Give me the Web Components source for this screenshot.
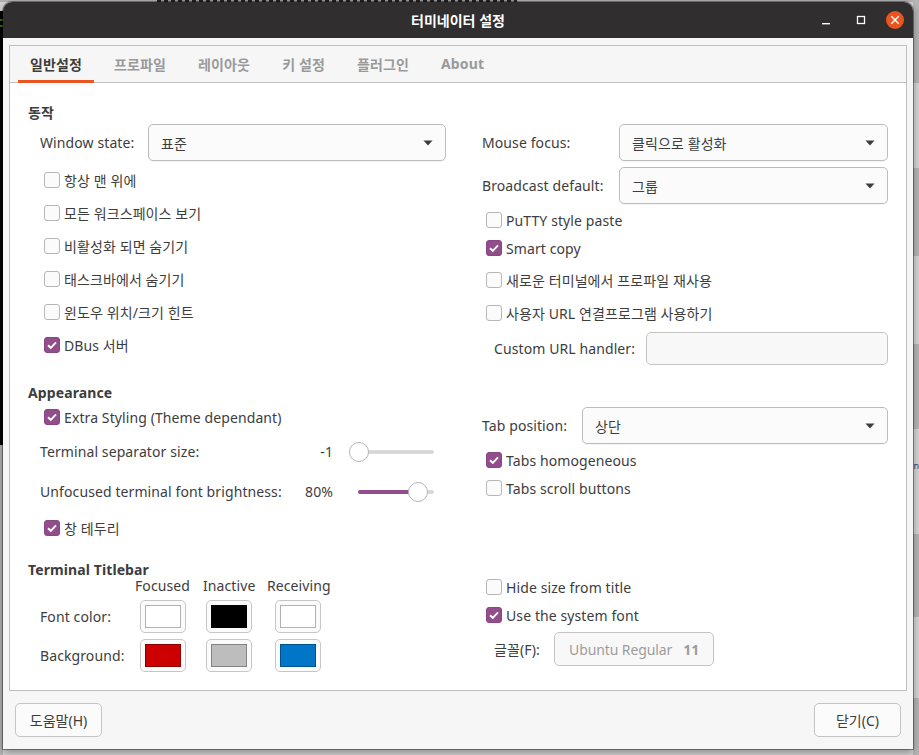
<!DOCTYPE html>
<html lang="ko">
<head>
<meta charset="utf-8">
<title>터미네이터 설정</title>
<style>
html, body { margin: 0; height: 100%; overflow: hidden; }
body { font-family: "Noto Sans", "Noto Sans CJK KR", sans-serif; font-size: 14px; letter-spacing: .1px; color: #3d3d3d; }
</style>
</head>
<body>
<template id="desktop-tpl">
<style>
:host { display: block; position: relative; width: 919px; height: 755px; overflow: hidden; background: #d4d4d4; }
.left { position: absolute; left: 0; top: 11px; width: 3px; height: 434px; background: linear-gradient(#000 8px, #3c6a10 8px, #3c6a10 10px, #000 10px, #000 14px, #3c6a10 14px, #3c6a10 16px, #000 16px); }
.left2 { position: absolute; left: 0; top: 445px; width: 3px; height: 310px; background: #b4b4b4; }
.top { position: absolute; left: 0; top: 0; width: 919px; height: 2px; background: #b0b0b0; }
.top i { position: absolute; left: 157px; top: 0; width: 360px; height: 2px; background: repeating-linear-gradient(90deg, #222 0 4px, #999 4px 7px); }
.right { position: absolute; left: 913px; top: 0; width: 6px; height: 755px; background: linear-gradient(#b6b6b6 0 83px, #d6d6d6 83px 168px, #b6b6b6 168px 256px, #d6d6d6 256px 344px, #b6b6b6 344px 429px, #d6d6d6 429px 534px, #b6b6b6 534px 617px, #d6d6d6 617px 698px, #b6b6b6 698px); }
.n { position: absolute; left: 913.5px; top: 459px; font-size: 9px; letter-spacing: 0; color: #234a7a; }
::slotted(*) { position: absolute; left: 3px; top: 2px; }
</style>
<div class="top"><i></i></div>
<div class="left"></div><div class="left2"></div><div class="right"></div><span class="n">n</span>
<slot></slot>
</template>

<template id="window-tpl">
<style>
:host { display: flex; flex-direction: column; width: 910px; height: 747px; box-sizing: border-box; background: #f6f6f6; border-radius: 9px 9px 0 0; box-shadow: 0 0 0 1px rgba(0,0,0,.35), 0 3px 9px rgba(0,0,0,.4); }
.bar { height: 36px; flex: none; display: grid; grid-template-columns: 1fr auto 1fr; align-items: center; background: #302e2e; border-radius: 9px 9px 0 0; color: #fff; font-weight: 700; letter-spacing: 0; }
.title { grid-column: 2; }
.ctl { grid-column: 3; justify-self: end; display: flex; align-items: center; padding-right: 9px; }
.ctl svg { display: block; }
.body { flex: 1; display: flex; flex-direction: column; padding: 7px 6px 0 6px; min-height: 0; }
</style>
<div class="bar">
  <div class="title"><slot name="title"></slot></div>
  <div class="ctl">
    <svg width="10" height="10" viewBox="0 0 10 10" style="margin-right:25px;margin-top:1px"><rect x="1" y="7" width="8" height="1.4" fill="#fff"/></svg>
    <svg width="10" height="10" viewBox="0 0 10 10" style="margin-right:20px"><rect x="1.5" y="1.5" width="7" height="7" fill="none" stroke="#fff" stroke-width="1.3"/></svg>
    <svg width="18" height="18" viewBox="0 0 18 18"><circle cx="9" cy="9" r="9" fill="#e95420"/><path d="M5.3 5.3l7.4 7.4M12.7 5.3l-7.4 7.4" stroke="#fff" stroke-width="1.4"/></svg>
  </div>
</div>
<div class="body"><slot></slot></div>
</template>

<template id="notebook-tpl">
<style>
:host { display: flex; flex-direction: column; height: 646px; flex: none; box-sizing: border-box; border: 1px solid #c0bfbe; background: #fff; }
.tabs { height: 36px; flex: none; display: flex; padding-left: 8px; background: #f6f6f6; border-bottom: 1px solid #c0bfbe; }
.page { flex: 1; display: grid; grid-template-columns: 418px 406px; column-gap: 36px; padding-left: 18px; align-items: start; }
</style>
<div class="tabs"><slot name="tab"></slot></div>
<div class="page"><slot></slot></div>
</template>

<template id="tab-tpl">
<style>
:host { display: flex; align-items: center; box-sizing: border-box; height: 37px; padding: 0 12px 2px; margin-right: 8px; font-weight: 700; letter-spacing: .13px; color: #9a9a9a; }
:host([active]) { color: #3d3d3d; box-shadow: inset 0 -3px 0 #e95420; }
</style>
<slot></slot>
</template>

<template id="heading-tpl">
<style>
:host { display: block; height: 18px; line-height: 18px; font-weight: 700; white-space: nowrap; }
</style>
<slot></slot>
</template>

<template id="check-tpl">
<style>
:host { display: flex; align-items: center; gap: 4px; white-space: nowrap; height: var(--row, 33px); }
.box { width: 16px; height: 16px; box-sizing: border-box; flex: none; border: 1px solid #b6b6b3; border-radius: 3px; background: #fbfbfb; }
:host([checked]) .box { border-color: #8a4684; background: #924d8b; }
svg { display: none; }
:host([checked]) svg { display: block; }
</style>
<div class="box"><svg width="14" height="14" viewBox="0 0 14 14"><path d="M3 7.2l2.8 2.6L11 4.3" fill="none" stroke="#fff" stroke-width="1.9"/></svg></div>
<div><slot></slot></div>
</template>

<template id="combo-tpl">
<style>
:host { display: flex; align-items: center; justify-content: space-between; flex: 1; box-sizing: border-box; height: 37px; padding: 0 12px; border: 1px solid #bdbcbb; border-radius: 5px; background: #fbfbfb; box-shadow: 0 1px 0 rgba(0,0,0,.04); white-space: nowrap; }
svg { display: block; }
</style>
<div><slot></slot></div>
<svg width="10" height="6" viewBox="0 0 10 6"><path d="M0.5 0.5h9L5 5.5z" fill="#3d3d3d"/></svg>
</template>

<template id="entry-tpl">
<style>
:host { display: block; flex: 1; box-sizing: border-box; height: 33px; border: 1px solid #c4c4c2; border-radius: 5px; background: #f8f8f8; }
</style>
</template>

<template id="row-tpl">
<style>
:host { display: flex; align-items: center; white-space: nowrap; }
</style>
<slot></slot>
</template>

<template id="slider-tpl">
<style>
:host { display: block; position: relative; width: 85px; height: 20px; flex: none; }
.track { position: absolute; left: 9px; right: 0; top: 8px; border-radius: 2px; background: #d6d6d4; border: 1px solid #dcdcda; height: 2px; }
.fill { position: absolute; left: 9px; top: 8px; height: 4px; border-radius: 2px; background: #924d8b; }
.knob { position: absolute; top: 0; width: 20px; height: 20px; box-sizing: border-box; border-radius: 50%; background: #fff; border: 1px solid #b5b5b2; }
</style>
<div class="track"></div><div class="fill"></div><div class="knob"></div>
</template>

<template id="swatch-tpl">
<style>
:host { display: flex; align-items: center; justify-content: center; width: 46px; height: 33px; box-sizing: border-box; border: 1px solid #c6c6c4; border-radius: 5px; background: #fbfbfb; }
.c { width: 36px; height: 23px; box-sizing: border-box; border: 1px solid rgba(0,0,0,.3); }
</style>
<div class="c"></div>
</template>

<template id="button-tpl">
<style>
:host { display: flex; align-items: center; justify-content: center; box-sizing: border-box; height: 34px; padding: 0 14px; border: 1px solid #c4c4c2; border-radius: 5px; background: #fbfbfb; white-space: nowrap; letter-spacing: 0; }
:host([disabled]) { color: #9c9c9c; background: #f8f8f8; letter-spacing: -.1px; }
</style>
<slot></slot>
</template>

<script>
function simple(tag, tpl, extra) {
  customElements.define(tag, class extends HTMLElement {
    constructor() {
      super();
      this.attachShadow({ mode: 'open' });
      this.shadowRoot.appendChild(document.getElementById(tpl).content.cloneNode(true));
    }
    connectedCallback() {
      if (extra) extra(this);
    }
  });
}
simple('tm-desktop', 'desktop-tpl');
simple('tm-window', 'window-tpl');
simple('tm-notebook', 'notebook-tpl');
simple('tm-tab', 'tab-tpl');
simple('tm-heading', 'heading-tpl');
simple('tm-check', 'check-tpl');
simple('tm-combo', 'combo-tpl');
simple('tm-entry', 'entry-tpl');
simple('tm-row', 'row-tpl');
simple('tm-button', 'button-tpl');
simple('tm-slider', 'slider-tpl', el => {
  const pos = Number(el.getAttribute('pos'));
  el.shadowRoot.querySelector('.knob').style.left = pos + 'px';
  el.shadowRoot.querySelector('.fill').style.width = (pos > 0 ? pos : 0) + 'px';
});
simple('tm-swatch', 'swatch-tpl', el => {
  el.shadowRoot.querySelector('.c').style.background = el.getAttribute('color');
});
</script>

<tm-desktop>
  <tm-window>
    <span slot="title">터미네이터 설정</span>
    <tm-notebook>
      <tm-tab slot="tab" active>일반설정</tm-tab>
      <tm-tab slot="tab">프로파일</tm-tab>
      <tm-tab slot="tab">레이아웃</tm-tab>
      <tm-tab slot="tab">키 설정</tm-tab>
      <tm-tab slot="tab">플러그인</tm-tab>
      <tm-tab slot="tab">About</tm-tab>

      <div style="padding-top:21px">
        <tm-heading>동작</tm-heading>
        <tm-row style="margin-top:2px;padding-left:12px">
          <span style="width:108px">Window state:</span>
          <tm-combo>표준</tm-combo>
        </tm-row>
        <div style="margin-top:2px;padding-left:16px">
          <tm-check>항상 맨 위에</tm-check>
          <tm-check>모든 워크스페이스 보기</tm-check>
          <tm-check>비활성화 되면 숨기기</tm-check>
          <tm-check>태스크바에서 숨기기</tm-check>
          <tm-check>윈도우 위치/크기 힌트</tm-check>
          <tm-check checked>DBus 서버</tm-check>
        </div>
        <tm-heading style="margin-top:23px">Appearance</tm-heading>
        <div style="margin-top:3px;padding-left:16px;--row:24px">
          <tm-check checked>Extra Styling (Theme dependant)</tm-check>
        </div>
        <tm-row style="padding-left:12px;height:40px;margin-top:2px">
          <span>Terminal separator size:</span>
          <span style="margin-left:auto;margin-right:16px">-1</span>
          <tm-slider pos="0" style="margin-right:12px;margin-top:2px"></tm-slider>
        </tm-row>
        <tm-row style="padding-left:12px;height:40px">
          <span>Unfocused terminal font brightness:</span>
          <span style="margin-left:auto;margin-right:16px">80%</span>
          <tm-slider pos="59" style="margin-right:12px;margin-top:2px"></tm-slider>
        </tm-row>
        <div style="margin-top:5px;padding-left:16px;--row:24px">
          <tm-check checked>창 테두리</tm-check>
        </div>
        <tm-heading style="margin-top:21px">Terminal Titlebar</tm-heading>
        <tm-row style="height:16px;margin-top:-2px;padding-left:107px">
          <span style="width:68px">Focused</span>
          <span style="width:64px">Inactive</span>
          <span>Receiving</span>
        </tm-row>
        <tm-row style="margin-top:7px;padding-left:12px">
          <span style="width:100px">Font color:</span>
          <tm-swatch color="#fff"></tm-swatch>
          <tm-swatch color="#000" style="margin-left:20px"></tm-swatch>
          <tm-swatch color="#fff" style="margin-left:23px"></tm-swatch>
        </tm-row>
        <tm-row style="margin-top:6px;padding-left:12px">
          <span style="width:100px">Background:</span>
          <tm-swatch color="#cc0000"></tm-swatch>
          <tm-swatch color="#bebdbd" style="margin-left:20px"></tm-swatch>
          <tm-swatch color="#0076c9" style="margin-left:23px"></tm-swatch>
        </tm-row>
      </div>

      <div style="padding-top:41px">
        <tm-row>
          <span style="width:137px">Mouse focus:</span>
          <tm-combo>클릭으로 활성화</tm-combo>
        </tm-row>
        <tm-row style="margin-top:6px">
          <span style="width:137px">Broadcast default:</span>
          <tm-combo>그룹</tm-combo>
        </tm-row>
        <div style="padding-left:4px;margin-top:2px;--row:28px">
          <tm-check>PuTTY style paste</tm-check>
          <tm-check checked>Smart copy</tm-check>
        </div>
        <div style="padding-left:4px;margin-top:1px">
          <tm-check>새로운 터미널에서 프로파일 재사용</tm-check>
          <tm-check>사용자 URL 연결프로그램 사용하기</tm-check>
        </div>
        <tm-row style="margin-top:3px;padding-left:12px">
          <span style="width:152px">Custom URL handler:</span>
          <tm-entry></tm-entry>
        </tm-row>
        <tm-row style="margin-top:42px">
          <span style="width:100px">Tab position:</span>
          <tm-combo>상단</tm-combo>
        </tm-row>
        <div style="padding-left:4px;margin-top:2px;--row:28px">
          <tm-check checked>Tabs homogeneous</tm-check>
          <tm-check>Tabs scroll buttons</tm-check>
        </div>
        <div style="padding-left:4px;margin-top:71px;--row:28px">
          <tm-check>Hide size from title</tm-check>
          <tm-check checked>Use the system font</tm-check>
        </div>
        <tm-row style="margin-top:3px;padding-left:12px">
          <span style="width:60px">글꼴(F):</span>
          <tm-button disabled style="width:160px;justify-content:flex-start">Ubuntu Regular<b style="margin-left:11px">11</b></tm-button>
        </tm-row>
      </div>
    </tm-notebook>
    <div style="display:flex;justify-content:space-between;padding:12px 6px 0">
      <tm-button style="width:87px">도움말(H)</tm-button>
      <tm-button style="width:87px">닫기(C)</tm-button>
    </div>
  </tm-window>
</tm-desktop>
</body>
</html>
